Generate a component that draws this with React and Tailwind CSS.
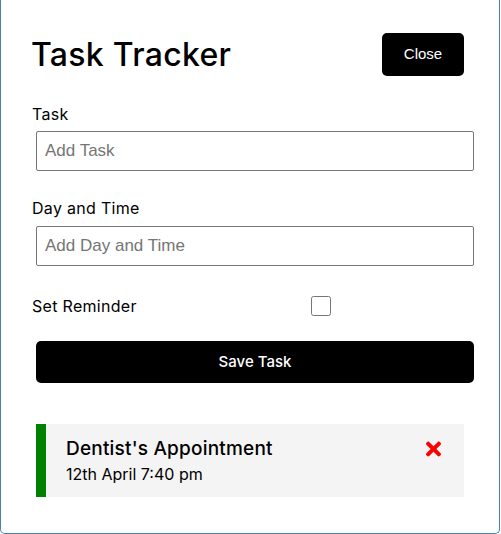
import React, { useState } from "react";
import { FaTimes } from "react-icons/fa";

const App = () => {
  const [text, setText] = useState("");
  const [day, setDay] = useState("");
  const [reminder, setReminder] = useState(false);

  return (
    <div className="w-[500px] h-[534px] bg-white border border-t-0 border-[#4682b4] rounded-b-[5px] px-[30px] pt-[28px] font-['Inter',sans-serif] text-black">
      {/* Header */}
      <div className="flex justify-between items-center h-[53px]">
        <h1 className="text-[32px] font-medium leading-none tracking-[0.3px]">Task Tracker</h1>
        <button className="bg-black text-white rounded-[5px] w-[82px] h-[43px] m-[5px] text-[15px] font-['Liberation_Sans',Arial,sans-serif]">
          Close
        </button>
      </div>

      {/* Add task form */}
      <label className="block mt-[21px] h-[24px] leading-[24px] text-[16px] tracking-[0.3px] ml-[1px]">Task</label>
      <input
        type="text"
        placeholder="Add Task"
        value={text}
        onChange={(e) => setText(e.target.value)}
        className="block ml-[5px] mt-[5px] w-full h-[40px] border border-[#767676] rounded-[2px] px-[8px] text-[17px] font-['Liberation_Sans',Arial,sans-serif] placeholder:text-[#757575]"
      />

      <label className="block mt-[25px] h-[24px] leading-[24px] text-[16px] tracking-[0.3px] ml-[1px]">Day and Time</label>
      <input
        type="text"
        placeholder="Add Day and Time"
        value={day}
        onChange={(e) => setDay(e.target.value)}
        className="block ml-[5px] mt-[6px] w-full h-[40px] border border-[#767676] rounded-[2px] px-[8px] text-[17px] font-['Liberation_Sans',Arial,sans-serif] placeholder:text-[#757575]"
      />

      <div className="flex items-center h-[20px] mt-[30px]">
        <label className="flex-1 text-[16px] tracking-[0.3px] ml-[1px]">Set Reminder</label>
        <div className="flex-[2] flex justify-center pr-[4px]">
          <input
            type="checkbox"
            checked={reminder}
            onChange={(e) => setReminder(e.target.checked)}
            className="w-5 h-5 m-0"
          />
        </div>
      </div>

      <button className="block ml-[5px] mt-[25px] w-full h-[42px] bg-black text-white rounded-[5px] text-[15px] font-medium">
        Save Task
      </button>

      {/* Task list */}
      <div className="mt-[41px] mx-[5px] h-[73px] bg-[#f4f4f4] border-l-[10px] border-[#008000] pl-[20px] pr-[23px] py-[10px]">
        <div className="flex justify-between items-center mt-[4px]">
          <h3 className="text-[19px] font-medium leading-[22px] tracking-[0.2px]">Dentist's Appointment</h3>
          <FaTimes className="text-[#ff0000] w-[15px] h-[22px]" />
        </div>
        <p className="text-[16px] leading-[22px] mt-[3px]">12th April 7:40 pm</p>
      </div>
    </div>
  );
};

export default App;
